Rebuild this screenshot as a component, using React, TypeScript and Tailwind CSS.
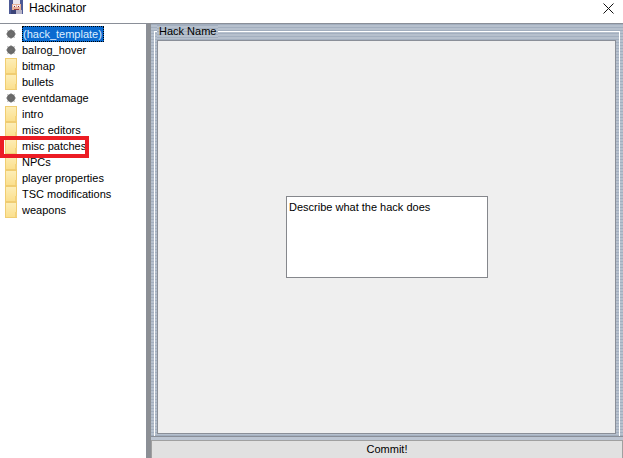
const font = "font-['Liberation_Sans',sans-serif]";

const stripes =
  "bg-[repeating-linear-gradient(0deg,#a3afbf_0px,#a3afbf_1px,#b6c0cd_1px,#b6c0cd_3px)]";

const items = [
  { name: "(hack_template)", kind: "file", selected: true },
  { name: "balrog_hover", kind: "file" },
  { name: "bitmap", kind: "folder" },
  { name: "bullets", kind: "folder" },
  { name: "eventdamage", kind: "file" },
  { name: "intro", kind: "folder" },
  { name: "misc editors", kind: "folder" },
  { name: "misc patches", kind: "folder" },
  { name: "NPCs", kind: "folder" },
  { name: "player properties", kind: "folder" },
  { name: "TSC modifications", kind: "folder" },
  { name: "weapons", kind: "folder" },
];

const AppIcon = () => (
  <svg width="14" height="14" viewBox="0 0 14 14" className="mb-[2px]">
    <rect width="14" height="14" fill="#4d5a96" />
    <path d="M4 0h7v4H4z" fill="#ece8ee" />
    <path d="M3 4h9v6H3z" fill="#e8b39a" />
    <path d="M4 5h3v2H4zM8 5h3v2H8z" fill="#f4f0f0" />
    <path d="M5 6h1v1H5zM9 6h1v1H9z" fill="#8a2030" />
    <path d="M5 9h5v1H5z" fill="#9c3a3a" />
    <path d="M2 10h5v4H2z" fill="#3c4478" />
    <path d="M7 10h6v4H7z" fill="#b8b4c8" />
  </svg>
);

const Folder = () => (
  <svg width="14" height="16" viewBox="0 0 14 16" className="ml-1 shrink-0">
    <defs>
      <linearGradient id="folderFill" x1="0" y1="0" x2="0" y2="1">
        <stop offset="0" stopColor="#fdeeb8" />
        <stop offset="1" stopColor="#fbdf8c" />
      </linearGradient>
    </defs>
    <rect x="1.5" y="0.5" width="11" height="15" fill="url(#folderFill)" stroke="#f0cd72" />
    <path d="M11 10h2v5h-2z" fill="#f3d27c" />
  </svg>
);

const Dot = () => (
  <svg width="14" height="16" viewBox="0 0 14 16" className="ml-1 shrink-0">
    <circle cx="7" cy="8" r="4" fill="#666" />
    <path d="M7 3v10M2 8h10M3.5 4.5l7 7M10.5 4.5l-7 7" stroke="#6e6e6e" strokeWidth="0.8" />
  </svg>
);

export default function App() {
  return (
    <div className={`w-[623px] h-[458px] overflow-hidden bg-white text-black flex flex-col text-[11px] ${font}`}>
      <div className="h-[23px] flex items-center pl-[9px] pr-[9px] pb-[7px]">
        <AppIcon />
        <span className="ml-[6px] text-[12px]">Hackinator</span>
        <svg width="11" height="11" viewBox="0 0 11 11" className="ml-auto">
          <path d="M0.5 0.5l10 10M10.5 0.5l-10 10" stroke="#111" />
        </svg>
      </div>

      <div className="flex-1 flex min-h-0 relative">
        <div className="w-[147px] border-t border-[#8a8f98] border-r pt-[2px]">
          {items.map((item) => (
            <div key={item.name} className="h-4 flex items-center">
              {item.kind === "folder" ? <Folder /> : <Dot />}
              <span
                className={
                  item.selected
                    ? "ml-1 h-4 leading-[14px] pr-[1px] bg-[#0a6ad0] text-[#dfefff] border border-dotted border-black"
                    : "ml-1"
                }
              >
                {item.name}
              </span>
            </div>
          ))}
        </div>

        <div className="w-1 bg-[#8c8f94]" />

        <div className="flex-1 flex flex-col min-w-0">
          <div className={`flex-1 min-h-0 border-t border-b border-[#8a8f98] pt-[7px] px-[3px] flex flex-col ${stripes}`}>
            <div className={`flex-1 min-h-0 border-t border-l border-white border-r pt-2 pl-[2px] pr-[3px] pb-[2px] ${stripes}`}>
              <div className="h-full border border-[#8a8f98] bg-[#efefef] flex items-center justify-center">
                <div className="w-[202px] h-[82px] border border-[#85878c] bg-white px-[2px] pt-[2px] ml-[1px]">
                  Describe what the hack does
                </div>
              </div>
            </div>
          </div>
          <div className="h-[3px] bg-[#bcc5d2]" />
          <div className="h-[18px] border-t border-x border-[#a0a0a0] bg-[#e1e1e1] flex items-center justify-center">
            Commit!
          </div>
        </div>

        <span className={`absolute left-[157px] top-[2px] h-[13px] leading-[13px] px-[2px] ${stripes}`}>Hack Name</span>

        <div className="absolute left-0 top-[113px] w-[89px] h-[22px] border-4 border-[#ec1c24]" />
      </div>
    </div>
  );
}
